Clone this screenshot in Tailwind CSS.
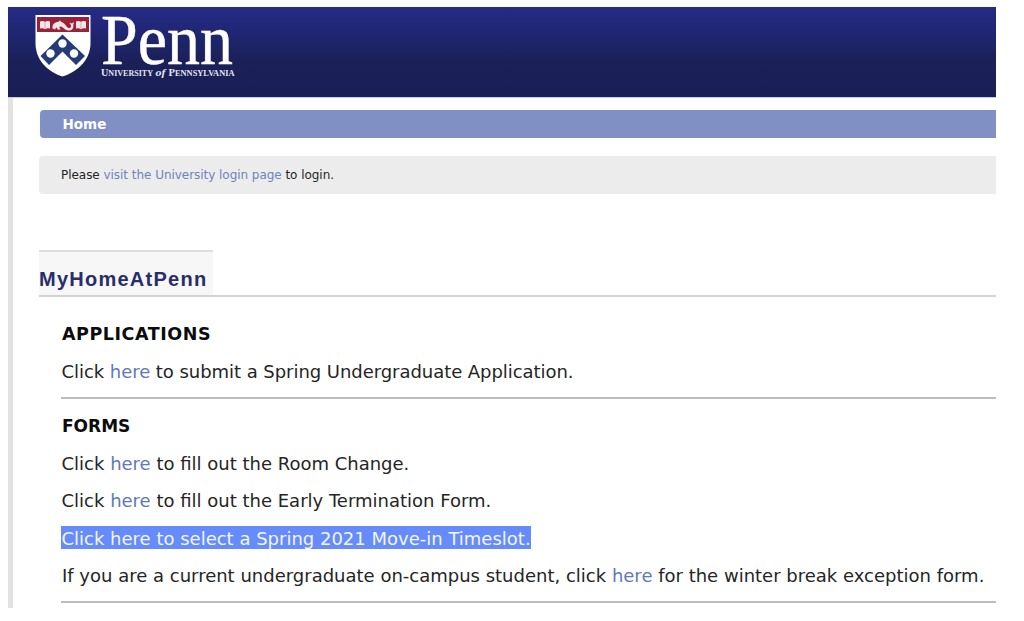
<!DOCTYPE html>
<html lang="en">

<head>
    <meta charset="UTF-8">
    <meta name="viewport" content="width=device-width, initial-scale=1.0">
    <title>MyHomeAtPenn</title>
    <script src="https://cdn.jsdelivr.net/npm/@tailwindcss/browser@4"></script>
</head>

<body class="bg-white">
    <div class="flex h-[608px] w-[996px] flex-col pt-[7px] pl-2 font-['DejaVu_Sans',sans-serif] text-[#252525]">
        <!-- Header -->
        <header class="h-[91px] shrink-0 border-b border-[#c5cae4] bg-linear-to-b from-[#252b88] via-[#1b2059] via-60% to-[#191e55]">
            <svg class="block overflow-visible" width="240" height="90" viewBox="8 7 240 90">
                <!-- Shield -->
                <path d="M35.5 15H90.5V43C90.5 59 79 71 62.500 76.500C46 71 35.500 59 35.500 43Z" fill="#fff" />
                <path d="M37 17H89V32H37Z" fill="#9b2139" />
                <path d="M62.500 34.500L85 56L76 65L62.500 51.500L49 65L40.500 56Z" fill="#253b78" />
                <circle cx="62.500" cy="43.500" r="4.200" fill="#fff" />
                <circle cx="50.500" cy="53.500" r="4.200" fill="#fff" />
                <circle cx="74" cy="53.500" r="4.200" fill="#fff" />
                <!-- Books and dolphin -->
                <path d="M40 21.500Q42.500 20.500 45 21.800Q47.500 20.500 50 21.500V28.500Q47 28 45 29.200Q43 28 40 28.500ZM76 21.500Q78.500 20.500 81 21.800Q83.500 20.500 86 21.500V28.500Q83 28 81 29.200Q79 28 76 28.500Z" fill="#f3e6e9" />
                <path d="M45 22V29M81 22V29" stroke="#c995a0" stroke-width=".7" />
                <path d="M52.500 28.500C52 25 54.500 22 58.500 21.800L60 20.500L61.500 22C65 22.800 66 27.500 69 28C71.500 28 71.500 25.500 70.500 24.500L69.500 22.500L71.800 23.500L74 22L73.200 25C74 28.500 71.500 30.800 68.500 30.500C64 30 63 26.500 60.500 26.500C59 26.500 59 28.500 61 29.500H57.500L56.800 27.500C55.500 27.500 55.500 28.500 55.500 29.500Z" fill="#f3e6e9" />
                <!-- Wordmark -->
                <text x="101" y="64.300" textLength="132" lengthAdjust="spacingAndGlyphs" fill="#fff" stroke="#fff" stroke-width=".4" class="font-['Liberation_Serif',serif] text-[71px]">Penn</text>
                <g fill="#e4e6f2" class="font-['Liberation_Serif',serif] font-bold">
                    <text x="101" y="75.500" textLength="52" lengthAdjust="spacingAndGlyphs" class="text-[7.5px]"><tspan class="text-[9.5px]">U</tspan>NIVERSITY</text>
                    <text x="155.500" y="75.500" textLength="10" lengthAdjust="spacingAndGlyphs" class="text-[11px] italic">of</text>
                    <text x="168.500" y="75.500" textLength="66" lengthAdjust="spacingAndGlyphs" class="text-[7.5px]"><tspan class="text-[9.5px]">P</tspan>ENNSYLVANIA</text>
                </g>
            </svg>
        </header>

        <!-- Page body -->
        <div class="flex flex-1 flex-col border-l-[5px] border-[#e2e2e2] pt-3 pl-[27px]">
            <nav class="flex h-7 items-center rounded-l bg-[#808fc4] pl-[22.5px] text-[13.5px] leading-7 font-bold text-white">
                <a href="#">Home</a>
            </nav>
            <div class="mt-[18px] -ml-px h-[38px] rounded-l bg-[#ececec] pl-[22px] text-xs leading-[38px] tracking-[-0.04px]">
                <p>Please <a class="text-[#6d84bd]" href="#">visit the University login page</a> to login.</p>
            </div>

            <div class="mt-[56px] -ml-px flex border-b-2 border-[#d3d3d3]">
                <h1 class="h-[45px] w-[174px] border-t-2 border-[#dedede] bg-[#f7f7f7] pt-[13px] font-['Liberation_Sans',sans-serif] text-xl leading-7 font-bold tracking-[1.25px] text-[#272e6b]">MyHomeAtPenn</h1>
            </div>

            <main class="ml-[21px] text-lg">
                <h2 class="mt-[23px] pl-px text-[17.5px] leading-7 font-bold tracking-[0.55px] text-[#0c0c0c]">APPLICATIONS</h2>
                <p class="mt-[10px] pl-[0.5px] leading-7 tracking-[-0.05px]">Click <a class="text-[#6079bd]" href="#">here</a> to submit a Spring Undergraduate Application.</p>
                <hr class="mt-[11px] border-t-2 border-[#bdbdbd]">
                <h2 class="mt-[13px] pl-px text-[17px] leading-7 font-bold text-[#0c0c0c]">FORMS</h2>
                <p class="mt-[10px] pl-[0.5px] leading-7">Click <a class="text-[#6079bd]" href="#">here</a> to fill out the Room Change.</p>
                <p class="mt-[9px] pl-[0.5px] leading-7">Click <a class="text-[#6079bd]" href="#">here</a> to fill out the Early Termination Form.</p>
                <p class="mt-[11px] h-[23px] w-[470px] bg-[#668bfb] pl-[0.5px] leading-[25px] whitespace-nowrap text-[#f2f6ff]">Click here to select a Spring 2021 Move-in Timeslot.</p>
                <p class="mt-[13px] pl-px leading-7 whitespace-nowrap">If you are a current undergraduate on-campus student, click <a class="text-[#6079bd]" href="#">here</a> for the winter break exception form.</p>
                <hr class="mt-[11px] border-t-2 border-[#bdbdbd]">
            </main>
        </div>
    </div>
</body>

</html>
